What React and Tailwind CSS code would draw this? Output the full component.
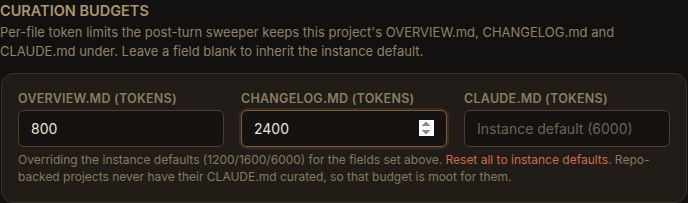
import { useState } from 'react';

const Field = ({ label, value, placeholder, focused }) => {
  const [v, setV] = useState(value);
  return (
    <div className="flex flex-col">
      <label className="text-[12.5px] font-semibold tracking-[0.02em] text-[#8a7c62] mb-[3px] leading-[16px]">
        {label}
      </label>
      <input
        type="number"
        autoFocus={focused}
        value={v}
        placeholder={placeholder}
        onChange={(e) => setV(e.target.value)}
        className={
          'h-[37px] w-full rounded-[6px] bg-[#15120f] px-[12px] text-[14px] text-[#ebe5da] placeholder:text-[#6d6454] outline-none border ' +
          (focused
            ? 'border-[#7a5a42] shadow-[0_0_0_2px_rgba(110,72,44,0.35)]'
            : 'border-[#4a4134]')
        }
      />
    </div>
  );
};

const App = () => {
  return (
    <div className="min-h-screen bg-[#131110] font-['Inter',sans-serif] pt-[1px]">
      <h2 className="text-[14.5px] font-semibold text-[#a8966f] leading-[20px]">CURATION BUDGETS</h2>
      <p className="text-[13px] leading-[19px] text-[#8f8268] mt-[2px] pr-[40px]">
        Per-file token limits the post-turn sweeper keeps this project's OVERVIEW.md, CHANGELOG.md and
        CLAUDE.md under. Leave a field blank to inherit the instance default.
      </p>
      <div className="mt-[12px] ml-[1px] mr-[1px] rounded-[12px] border border-[#3a3229] bg-[#211c17] px-[16px] pt-[17px] pb-[17px]">
        <div className="grid grid-cols-3 gap-[17px]">
          <Field label="OVERVIEW.MD (TOKENS)" value="800" />
          <Field label="CHANGELOG.MD (TOKENS)" value="2400" focused />
          <Field label="CLAUDE.MD (TOKENS)" value="" placeholder="Instance default (6000)" />
        </div>
        <p className="mt-[4px] text-[12px] leading-[17px] text-[#857a64] pr-[10px]">
          Overriding the instance defaults (1200/1600/6000) for the fields set above.{' '}
          <span className="text-[#cf6a4c]">Reset all to instance defaults</span>. Repo-backed projects never have their CLAUDE.md curated, so that budget is moot for them.
        </p>
      </div>
    </div>
  );
};

export default App;
